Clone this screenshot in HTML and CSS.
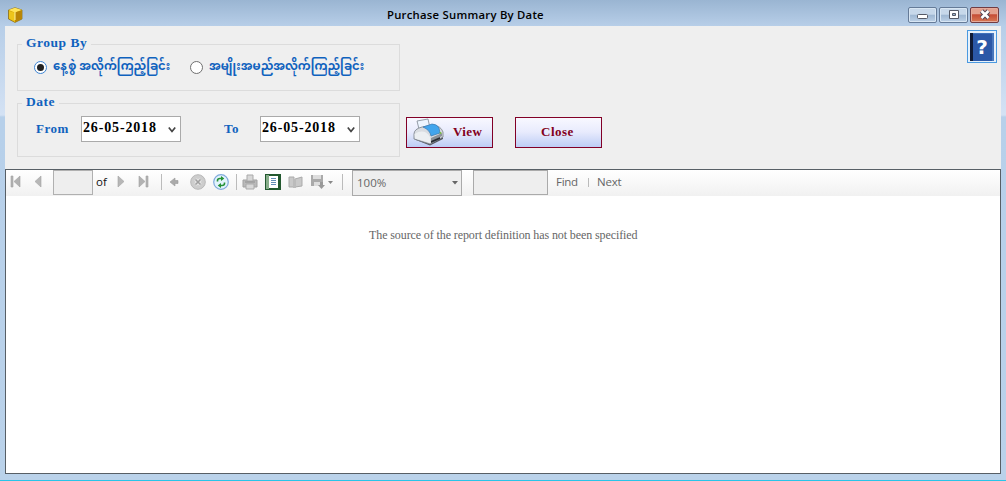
FILE: index.html
```html
<!DOCTYPE html>
<html lang="en">
<head>
<meta charset="utf-8">
<title>Purchase Summary By Date</title>
<link rel="stylesheet" href="styles.css">
</head>
<body>
<div class="window">
  <header class="titlebar">
    <svg class="app-icon" width="16" height="16" viewBox="0 0 16 16"><path d="M8 .7 15 3v9l-7 3.400L1.500 12V3z" fill="#d3a500" stroke="#85660e" stroke-width=".7"/><path d="m1.500 3 6.500 2.500L15 3 8 .8z" fill="#ffe45a"/><path d="M8 5.500V15l6.600-3.300V3.200z" fill="#b98506"/><path d="M2 4v7.500L8 15V5.800z" fill="#edc51b"/><path d="M8 5v8" stroke="#fff3a0"/></svg>
    <h1 class="title">Purchase Summary By Date</h1>
    <div class="controls">
      <span class="control"><svg width="27" height="14"><rect x="8.500" y="6.500" width="10" height="4" rx="1" fill="#fff" stroke="#545966"/></svg></span>
      <span class="control"><svg width="27" height="14"><path d="M9.500 2.500h9v8h-9z" fill="#fff" stroke="#545966"/><path d="M12.500 5.500h3v2h-3z" fill="#9bb4d0" stroke="#545966"/></svg></span>
      <span class="control close-control"><svg width="27" height="14"><path d="m10.500 3 7 7m0-7-7 7" stroke="#544454" stroke-width="4.600"/><path d="m10.500 3 7 7m0-7-7 7" stroke="#fff" stroke-width="2.600"/></svg></span>
    </div>
  </header>
  <main class="client">
    <section class="filters">
      <div class="groups">
        <fieldset class="group group-by">
          <legend>Group By</legend>
          <label class="choice"><span class="radio selected"></span><span class="burmese by-date" lang="my">နေ့စွဲ အလိုက်ကြည့်ခြင်း</span></label>
          <label class="choice"><span class="radio"></span><span class="burmese by-item" lang="my">အမျိုးအမည်အလိုက်ကြည့်ခြင်း</span></label>
        </fieldset>
        <fieldset class="group dates">
          <legend>Date</legend>
          <span class="label from">From</span>
          <span class="date-box"><span class="date">26-05-2018</span><svg width="8" height="8"><path d="m.8 1.500 3.200 4 3.200-4" fill="none" stroke="#444" stroke-width="1.700"/></svg></span>
          <span class="label to">To</span>
          <span class="date-box"><span class="date">26-05-2018</span><svg width="8" height="8"><path d="m.8 1.500 3.200 4 3.200-4" fill="none" stroke="#444" stroke-width="1.700"/></svg></span>
        </fieldset>
      </div>
      <div class="actions">
        <button class="action view"><svg width="31" height="28" viewBox="0 0 31 28"><path d="M2 20 17 26l13-7v2l-13 6.500L3 22z" fill="#555a62"/><path d="m4 3 11-2 2 9-11 1z" fill="#edf5ff" stroke="#7d8792" stroke-width=".8"/><path d="M1 16Q1 11 9 9l11-2q8 1 10 7v5l-13 7L1 21z" fill="#d9dce1" stroke="#777e86" stroke-width=".8"/><path d="m10 9 9-3q5 0 7 4l1 5-9 3q-1-6-8-9z" fill="#42a5ed" stroke="#3978b0" stroke-width=".7"/><path d="M1.500 16q10-6 15.500 3l.5 6L2 20.500z" fill="#eceff2"/><path d="m18 20 11-5v3l-11 6z" fill="#8b9299"/><path d="m18 23 9-4v2l-9 4z" fill="#292e35"/><circle cx="27.500" cy="15" r="1" fill="#76bc3d"/></svg><span>View</span></button>
        <button class="action close">Close</button>
      </div>
      <button class="help"><svg width="24" height="28" viewBox="0 0 24 28"><path d="M0 0h24v28H0z" fill="#2b58a7"/><path d="M0 0h3v28H0z" fill="#101b35"/><path d="M22 0h2v28h-2z" fill="#4777bd"/><path d="M3 0h19v1H3z" fill="#3e71bb"/></svg><span class="question">?</span></button>
    </section>
    <section class="report">
      <div class="toolbar">
        <svg class="tool first" width="12" height="14"><path d="M1 1h2v11H1zM10 1v11L4 6.500z" fill="#b2b2b2" stroke="#a3a3a3" stroke-width=".6"/></svg>
        <svg class="tool prev" width="9" height="14"><path d="M7 1v11L1 6.500z" fill="#b7b7b7" stroke="#a3a3a3" stroke-width=".6"/></svg>
        <span class="page-box"></span><span class="of">of</span>
        <svg class="tool next" width="9" height="14"><path d="M1 1v11l6-5.500z" fill="#b7b7b7" stroke="#a3a3a3" stroke-width=".6"/></svg>
        <svg class="tool last" width="12" height="14"><path d="M1 1v11l6-5.500zM8 1h2v11H8z" fill="#b2b2b2" stroke="#a3a3a3" stroke-width=".6"/></svg>
        <i class="sep s1"></i>
        <svg class="tool back" width="10" height="10"><path d="m1 5 5-4v2.500h3v3H6V9z" fill="#aaa" stroke="#999" stroke-width=".6"/></svg>
        <svg class="tool stop" width="16" height="16"><circle cx="8" cy="8" r="7.300" fill="#cdcdcd" stroke="#b8b8b8"/><path d="m5.500 5.500 5 5m0-5-5 5" stroke="#e8e8e8" stroke-width="3.500"/><path d="m5.500 5.500 5 5m0-5-5 5" stroke="#a0a0a0" stroke-width="1.600"/></svg>
        <svg class="tool refresh" width="16" height="16"><circle cx="8" cy="8" r="7.300" fill="#e2f3fc" stroke="#7fa9dc" stroke-width="1.200"/><path d="M4.500 7.500V6.500Q4.500 4.500 7 4.500h1.500M11.500 8.500v1q0 2-2.500 2H7.500" fill="none" stroke="#249136" stroke-width="1.600"/><path d="m8 2 3.300 2.500L8 7zM8 9v5l-3.300-2.500z" fill="#249136"/></svg>
        <i class="sep s2"></i>
        <svg class="tool print" width="16" height="16"><path d="M1 6h14v7H1z" fill="#bababa" stroke="#a2a2a2"/><path d="M5 1h6v6H5zM4 10h8v5H4z" fill="#d8d8d8" stroke="#aaa"/><path d="M3 8h10" stroke="#909090"/></svg>
        <svg class="tool layout" width="16" height="16"><path d="M0 0h16v16H0z" fill="#22582f"/><path d="M1 1h3v14H1z" fill="#87ae8a"/><path d="M4 2h9v12H4z" fill="#fff"/><path d="M6 4.500h5M6 6.500h5M6 8.500h5M6 10.500h5" stroke="#638eb6"/></svg>
        <svg class="tool setup" width="16" height="16"><path d="M1 3h5v10H1zM7 5l7-2v9l-7 1z" fill="#c9c9c9" stroke="#ababab"/><path d="M5 5h3v9H5z" fill="#bbb"/></svg>
        <svg class="tool export" width="24" height="16"><path d="M1 1h12v11H1z" fill="#aaa"/><path d="M3 1h8v4H3zM4 8h6v4H4z" fill="#ddd"/><path d="M10 8h3v3h2l-3.500 4L8 11h2z" fill="#999"/><path d="M18 7h5l-2.500 3z" fill="#888"/></svg>
        <i class="sep s3"></i>
        <span class="zoom"><span>100%</span><svg width="6" height="4"><path d="M0 0h6L3 3.500z" fill="#666"/></svg></span>
        <span class="search"></span><span class="find">Find</span><i class="small-sep"></i><span class="find-next">Next</span>
      </div>
      <p class="message"><span>The source of the report definition has not been specified</span></p>
    </section>
  </main>
</div>
</body>
</html>
```
FILE: styles.css
```css
* { box-sizing: border-box; }
body { margin: 0; font-family: "Open Sans", "Noto Sans", sans-serif; overflow: hidden; }
.window { width: 1006px; height: 481px; padding: 0 5px 6px; background: linear-gradient(#9ab5d2 0, #b7cee8 26px, #d4e2f4 115px, #b7d0ea 117px, #bad2ea 100%); border-bottom: 1px solid #29c4e8; }
.titlebar { display: flex; height: 26px; align-items: flex-start; }
.app-icon { margin: 7px 0 0 2px; }
.title { flex: 1; margin: 6px 0 0 364px; font: 600 11.300px/18px "Open Sans", sans-serif; letter-spacing: .25px; white-space: nowrap; color: #000; }
.controls { display: flex; gap: 2px; margin: 7px 2px 0 0; }
.control { display: flex; width: 29px; height: 16px; border: 1px solid #657b98; border-radius: 2px; background: linear-gradient(#c7d8ea 0 45%, #9eb7d2 50%, #bdd1e7); box-shadow: inset 0 0 0 1px #d8e6f3; }
.close-control { border-color: #713c42; background: linear-gradient(#e3a18f 0 42%, #c54c36 48%, #d87954); box-shadow: inset 0 0 0 1px #e5aa9a; }
.client { height: 448px; background: #efefef; }
.filters { display: flex; height: 143px; }
.groups { width: 383px; margin-left: 12px; padding-top: 10px; }
.group { display: flex; position: relative; margin: 0; padding: 0; border: 0; min-width: 0; box-shadow: inset 0 0 0 1px #dcdcdc; }
.group legend { position: absolute; left: 5px; top: -10px; padding: 0 4px; background: #efefef; font: bold 13.500px/18px "Liberation Serif", serif; color: #0f62be; letter-spacing: .5px; white-space: nowrap; }
.group-by { height: 47px; margin-top: 8px; }
.dates { height: 54px; margin-top: 12px; }
.choice { display: flex; height: 13px; margin-top: 17px; align-items: center; }
.choice:nth-of-type(1) { width: 156px; margin-left: 17px; }
.radio { display: flex; align-items: center; justify-content: center; flex: none; width: 13px; height: 13px; border: 1px solid #707070; border-radius: 50%; background: #fff; }
.radio.selected { border-color: #3c83d2; }
.radio.selected::after { content: ""; width: 7px; height: 7px; border-radius: 50%; background: #222; }
.burmese { margin-left: 6px; font: bold 11.600px/20px "Noto Sans Myanmar", "Padauk", "Myanmar Text", "Noto Sans", sans-serif; color: #0f62be; white-space: nowrap; }
.label { font: bold 13px/16px "Liberation Serif", serif; color: #0f62be; letter-spacing: .5px; margin-top: 18px; }
.from { width: 45px; margin-left: 19px; }
.to { width: 36px; margin-left: 43px; }
.date-box { display: flex; width: 100px; height: 26px; margin-top: 13px; padding: 0 4px 0 1px; border: 1px solid #aaa; background: #fff; justify-content: space-between; }
.date { font: bold 14px/22px "Liberation Serif", serif; letter-spacing: .85px; white-space: nowrap; }
.date-box svg { margin-top: 9px; }
.actions { display: flex; gap: 22px; margin: 91px 0 0 6px; }
.action { display: flex; width: 87px; height: 31px; padding: 0; border: 1px solid #820026; background: linear-gradient(#f8f8ff 0, #e8ebfd 48%, #bdcdf5); font: bold 13px/28px "Liberation Serif", serif; letter-spacing: .25px; color: #820020; }
.view { padding-left: 6px; }
.view span { margin-left: 9px; letter-spacing: .4px; }
.close { padding-left: 25px; letter-spacing: .5px; }
.help { display: grid; width: 30px; height: 33px; margin: 4px 4px 0 auto; padding: 0; border: 1px solid #4a99e0; background: #e6f1fb; place-items: center; }
.help > * { grid-area: 1 / 1; }
.question { color: #fff; font: bold 20px/26px "DejaVu Sans", sans-serif; }
.report { height: 305px; border: 1px solid #575f66; background: #fff; }
.toolbar { display: flex; height: 26px; padding-bottom: 2px; align-items: center; background: linear-gradient(#fff, #f1f1f1); font: 11.500px/20px "Open Sans", sans-serif; color: #666; }
.toolbar > * { flex: none; }
.first { margin-left: 4px; }
.prev { margin-left: 12px; }
.page-box { align-self: flex-start; width: 40px; height: 25px; margin-left: 10px; border: 1px solid #b0b0b0; background: #eee; }
.of { width: 21px; margin-left: 3px; color: #111; }
.next { width: 9px; }
.last { margin-left: 12px; }
.sep { width: 1px; height: 16px; background: #bbb; }
.s1 { margin-left: 11px; }
.back { margin-left: 7px; }
.stop { margin-left: 11px; }
.refresh { margin-left: 7px; }
.s2 { margin-left: 7px; }
.print { margin-left: 5px; }
.layout { margin-left: 7px; }
.setup { margin-left: 7px; }
.export { margin-left: 6px; }
.s3 { margin-left: 8px; }
.zoom { display: flex; align-self: flex-start; align-items: center; justify-content: space-between; width: 110px; height: 26px; margin-left: 9px; padding: 0 3px 0 4px; border: 1px solid #aaa; background: #eee; }
.search { align-self: flex-start; width: 75px; height: 25px; margin-left: 11px; border: 1px solid #aaa; background: #eee; }
.find { width: 32px; margin-left: 8px; letter-spacing: -.3px; }
.small-sep { width: 1px; height: 9px; background: #bbb; }
.find-next { margin-left: 8px; letter-spacing: -.2px; }
.message { margin: 30px 0 0 363px; font: 12px/18px "Liberation Serif", serif; letter-spacing: -.1px; color: #666; white-space: nowrap; }
```
